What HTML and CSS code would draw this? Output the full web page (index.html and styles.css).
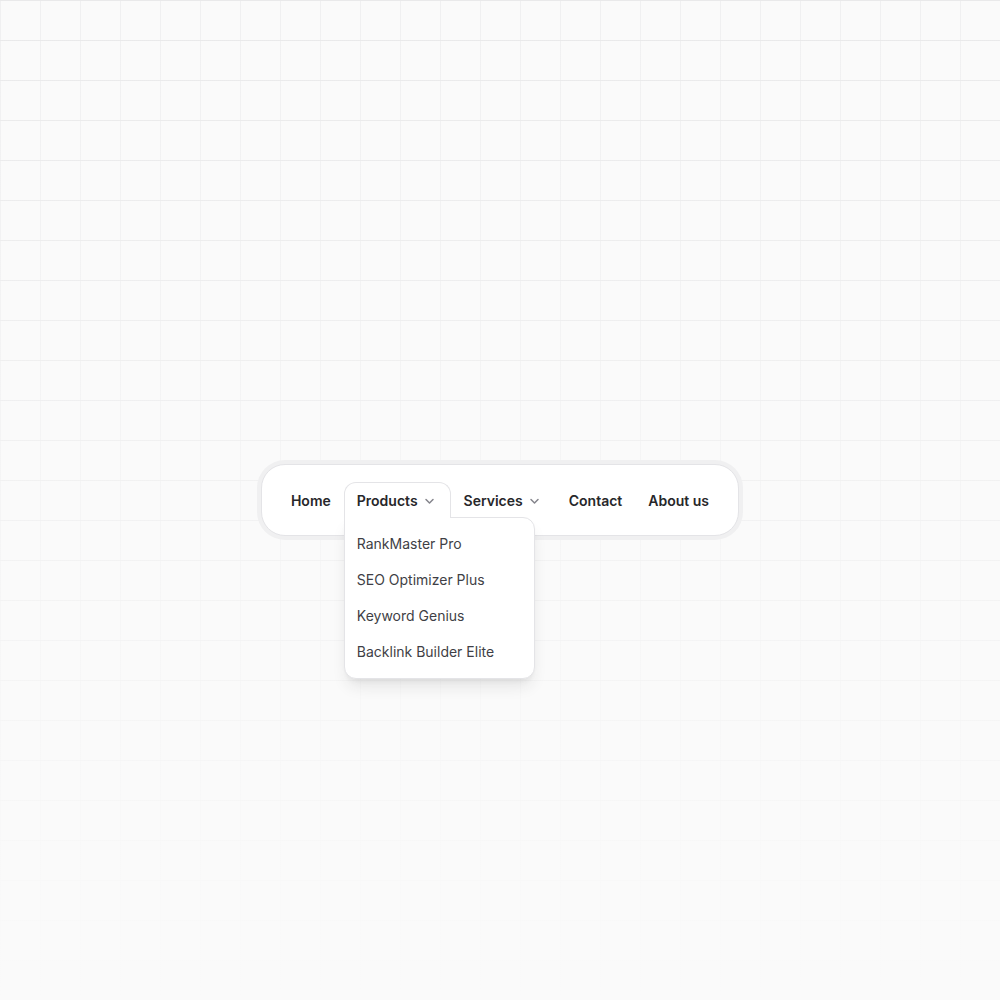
FILE: index.html
```
<!DOCTYPE html>
<html lang="en">
    <head>
        <meta charset="UTF-8">
        <meta name="viewport" content="width=device-width, initial-scale=1.0">
        <title>Navigation Menu</title>
        <link rel="stylesheet" href="styles.css">
    </head>
    <body>

        <nav class="navbar">
            <ul class="nav-list">
                <li class="nav-item"><a class="nav-link" href="#">Home</a></li>
                <li class="nav-item open">
                    <button type="button" class="nav-link" aria-expanded="true" aria-controls="products-menu">
                        Products
                        <svg class="chevron" viewBox="0 0 16 16" aria-hidden="true"><path d="M4 6.5 7.5 10 11 6.5"/></svg>
                    </button>
                    <ul class="dropdown" id="products-menu">
                        <li><a href="#">RankMaster Pro</a></li>
                        <li><a href="#">SEO Optimizer Plus</a></li>
                        <li><a href="#">Keyword Genius</a></li>
                        <li><a href="#">Backlink Builder Elite</a></li>
                    </ul>
                </li>
                <li class="nav-item">
                    <button type="button" class="nav-link" aria-expanded="false">
                        Services
                        <svg class="chevron" viewBox="0 0 16 16" aria-hidden="true"><path d="M4 6.5 7.5 10 11 6.5"/></svg>
                    </button>
                </li>
                <li class="nav-item"><a class="nav-link" href="#">Contact</a></li>
                <li class="nav-item"><a class="nav-link" href="#">About us</a></li>
            </ul>
        </nav>

    </body>
</html>
```
FILE: styles.css
```
*{
    margin: 0;
    padding: 0;
    box-sizing: border-box;
}
body{
    min-height: 100vh;
    display: flex;
    align-items: center;
    justify-content: center;
    font-family: Inter, sans-serif;
    font-size: 14px;
    line-height: 20px;
    color: #27272a;
    /* grid lines that fade out towards the bottom */
    background-color: #fafafa;
    background-image:
        linear-gradient(to bottom, rgba(250,250,250,0), #fafafa),
        linear-gradient(to bottom, #e9e9ea 1px, transparent 1px),
        linear-gradient(to right, #f0f0f1 1px, transparent 1px);
    background-size: 100% 100%, 40px 40px, 40px 40px;
}
ul{
    list-style: none;
}
a{
    color: inherit;
    text-decoration: none;
}
.navbar{
    padding: 17px 16px;
    background-color: #ffffff;
    border: 1px solid #e4e4e7;
    border-radius: 24px;
    box-shadow: 0 0 0 4px #f0f0f1;
}
.nav-list{
    display: flex;
}
.nav-item{
    position: relative;
}
.nav-link{
    display: flex;
    align-items: center;
    gap: 4px;
    padding: 8px 12px 6px;
    border: 1px solid transparent;
    border-radius: 12px;
    background: none;
    font: inherit;
    font-weight: 600;
    color: inherit;
    cursor: pointer;
}
.chevron{
    width: 16px;
    height: 16px;
    fill: none;
    stroke: #85858c;
    stroke-width: 1.5;
    stroke-linecap: round;
    stroke-linejoin: round;
}

/* open tab covers the top border of its dropdown */
.open .nav-link{
    position: relative;
    z-index: 2;
    background-color: #ffffff;
    border-color: #e4e4e7;
    border-bottom: none;
    border-radius: 12px 12px 0 0;
    padding-bottom: 7px;
}
.dropdown{
    position: absolute;
    top: 35px;
    left: 0;
    z-index: 1;
    min-width: 191px;
    padding: 8px 0;
    background-color: #ffffff;
    border: 1px solid #e4e4e7;
    border-radius: 0 12px 12px 12px;
    box-shadow: 0 10px 15px -3px rgba(39,39,42,0.1), 0 4px 6px -4px rgba(39,39,42,0.1);
}
.dropdown a{
    display: block;
    padding: 8px 12px;
    color: #3f3f46;
    white-space: nowrap;
}
```
